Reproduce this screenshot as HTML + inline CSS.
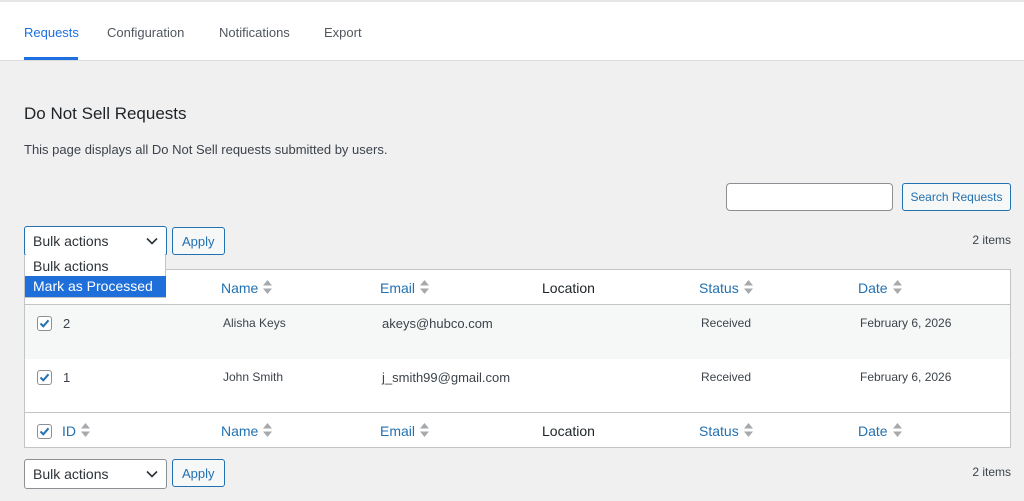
<!DOCTYPE html>
<html><head><style>
*{margin:0;padding:0;box-sizing:border-box}
body{width:1024px;height:501px;overflow:hidden;background:#f0f0f1;font-family:"Liberation Sans",sans-serif;color:#3c434a;position:relative;font-size:13px}
.a{position:absolute;white-space:nowrap}
.hdr{position:absolute;left:0;top:0;width:1024px;height:61px;background:#fff;border-top:2px solid #e6e6e6;border-bottom:1px solid #dcdcde}
.tab{position:absolute;top:23px;font-size:13px;color:#50575e}
.sel{position:absolute;height:30px;background:#fff;border:1px solid #8c8f94;border-radius:3px;font-size:14px;color:#2c3338;padding:6px 8px}
.btn{position:absolute;height:30px;background:#f6f7f7;border:1px solid #2271b1;border-radius:3px;color:#2271b1;font-size:13px;padding:6px 9px;text-align:center;white-space:nowrap}
.tbl{position:absolute;left:24px;top:269px;width:987px;height:179px;border:1px solid #c3c4c7;background:#fff}
.row{position:absolute;left:0;width:985px}
.th{position:absolute;font-size:14px;color:#2271b1;white-space:nowrap}
.td{position:absolute;font-size:13px;color:#3c434a;white-space:nowrap}
.cb{position:absolute;left:12px;width:15px;height:15px;border:1px solid #8c8f94;border-radius:3px;background:#fff}
.cb svg{position:absolute;left:0;top:0}
.s{display:inline-block;vertical-align:-1px;margin-left:5px}
</style></head><body>
<div class="hdr">
<div class="tab" style="left:24px;color:#1e6fe0">Requests</div>
<div style="position:absolute;left:24px;top:55px;width:54px;height:3px;background:#1e6fe0"></div>
<div class="tab" style="left:107px">Configuration</div>
<div class="tab" style="left:219px">Notifications</div>
<div class="tab" style="left:324px">Export</div>
</div>
<div class="a" style="left:24px;top:104px;font-size:17px;color:#1d2327">Do Not Sell Requests</div>
<div class="a" style="left:24px;top:142px;font-size:13px;color:#3c434a">This page displays all Do Not Sell requests submitted by users.</div>
<div style="position:absolute;left:726px;top:183px;width:167px;height:28px;background:#fff;border:1px solid #8c8f94;border-radius:4px"></div>
<div class="btn" style="left:902px;top:183px;width:109px;height:28px;padding:6px 0;font-size:12px">Search Requests</div>
<div class="a" style="right:13px;top:233px;font-size:12px">2 items</div>
<div class="a" style="right:13px;top:465px;font-size:12px">2 items</div>

<div class="tbl">
<div class="row" style="top:0;height:35px;border-bottom:1px solid #c3c4c7">
<div class="th" style="left:196px;top:10px">Name<svg class="s" width="9" height="14" viewBox="0 0 9 14"><path d="M4.5 0L9 5.5H0zM4.5 14L0 8.5h9z" fill="#a7aaad"/></svg></div>
<div class="th" style="left:355px;top:10px">Email<svg class="s" width="9" height="14" viewBox="0 0 9 14"><path d="M4.5 0L9 5.5H0zM4.5 14L0 8.5h9z" fill="#a7aaad"/></svg></div>
<div class="td" style="left:517px;top:10px;font-size:14px;color:#1d2327">Location</div>
<div class="th" style="left:674px;top:10px">Status<svg class="s" width="9" height="14" viewBox="0 0 9 14"><path d="M4.5 0L9 5.5H0zM4.5 14L0 8.5h9z" fill="#a7aaad"/></svg></div>
<div class="th" style="left:833px;top:10px">Date<svg class="s" width="9" height="14" viewBox="0 0 9 14"><path d="M4.5 0L9 5.5H0zM4.5 14L0 8.5h9z" fill="#a7aaad"/></svg></div>
</div>
<div class="row" style="top:35px;height:54px;background:#f6f7f7">
<div class="cb" style="top:11px"><svg width="13" height="13" viewBox="0 0 13 13"><path d="M2.5 6.5l2.8 2.8 5.2-6" stroke="#2271b1" stroke-width="2" fill="none"/></svg></div>
<div class="td" style="left:38px;top:11px">2</div>
<div class="td" style="left:198px;top:11px;font-size:12px">Alisha Keys</div>
<div class="td" style="left:357px;top:11px">akeys@hubco.com</div>
<div class="td" style="left:676px;top:11px;font-size:12px">Received</div>
<div class="td" style="left:835px;top:11px;font-size:12px">February 6, 2026</div>
</div>
<div class="row" style="top:89px;height:54px;border-bottom:1px solid #c3c4c7">
<div class="cb" style="top:11px"><svg width="13" height="13" viewBox="0 0 13 13"><path d="M2.5 6.5l2.8 2.8 5.2-6" stroke="#2271b1" stroke-width="2" fill="none"/></svg></div>
<div class="td" style="left:38px;top:11px">1</div>
<div class="td" style="left:198px;top:11px;font-size:12px">John Smith</div>
<div class="td" style="left:357px;top:11px">j_smith99@gmail.com</div>
<div class="td" style="left:676px;top:11px;font-size:12px">Received</div>
<div class="td" style="left:835px;top:11px;font-size:12px">February 6, 2026</div>
</div>
<div class="row" style="top:144px;height:34px">
<div class="cb" style="top:10px"><svg width="13" height="13" viewBox="0 0 13 13"><path d="M2.5 6.5l2.8 2.8 5.2-6" stroke="#2271b1" stroke-width="2" fill="none"/></svg></div>
<div class="th" style="left:37px;top:9px">ID<svg class="s" width="9" height="14" viewBox="0 0 9 14"><path d="M4.5 0L9 5.5H0zM4.5 14L0 8.5h9z" fill="#a7aaad"/></svg></div>
<div class="th" style="left:196px;top:9px">Name<svg class="s" width="9" height="14" viewBox="0 0 9 14"><path d="M4.5 0L9 5.5H0zM4.5 14L0 8.5h9z" fill="#a7aaad"/></svg></div>
<div class="th" style="left:355px;top:9px">Email<svg class="s" width="9" height="14" viewBox="0 0 9 14"><path d="M4.5 0L9 5.5H0zM4.5 14L0 8.5h9z" fill="#a7aaad"/></svg></div>
<div class="td" style="left:517px;top:9px;font-size:14px;color:#1d2327">Location</div>
<div class="th" style="left:674px;top:9px">Status<svg class="s" width="9" height="14" viewBox="0 0 9 14"><path d="M4.5 0L9 5.5H0zM4.5 14L0 8.5h9z" fill="#a7aaad"/></svg></div>
<div class="th" style="left:833px;top:9px">Date<svg class="s" width="9" height="14" viewBox="0 0 9 14"><path d="M4.5 0L9 5.5H0zM4.5 14L0 8.5h9z" fill="#a7aaad"/></svg></div>
</div>
</div>

<div class="sel" style="left:24px;top:226px;width:143px;border-color:#2271b1">Bulk actions<svg style="position:absolute;right:8px;top:10px" width="12" height="8" viewBox="0 0 12 8"><path d="M1 1.5l5 5 5-5" stroke="#2c3338" stroke-width="1.6" fill="none"/></svg></div>
<div class="btn" style="left:172px;top:227px;height:28px;padding:6px 9px">Apply</div>
<div style="position:absolute;left:24px;top:255px;width:142px;height:43px;background:#fff;border:1px solid #c3c4c7;border-top:none">
<div class="a" style="left:8px;top:3px;font-size:14px;color:#2c3338">Bulk actions</div>
<div style="position:absolute;left:0;top:21px;width:141px;height:21px;background:#1e6fd9;color:#fff;font-size:14px;padding:2px 8px;white-space:nowrap">Mark as Processed</div>
</div>

<div class="sel" style="left:24px;top:459px;width:143px">Bulk actions<svg style="position:absolute;right:8px;top:10px" width="12" height="8" viewBox="0 0 12 8"><path d="M1 1.5l5 5 5-5" stroke="#2c3338" stroke-width="1.6" fill="none"/></svg></div>
<div class="btn" style="left:172px;top:459px;height:28px;padding:6px 9px">Apply</div>
</body></html>
